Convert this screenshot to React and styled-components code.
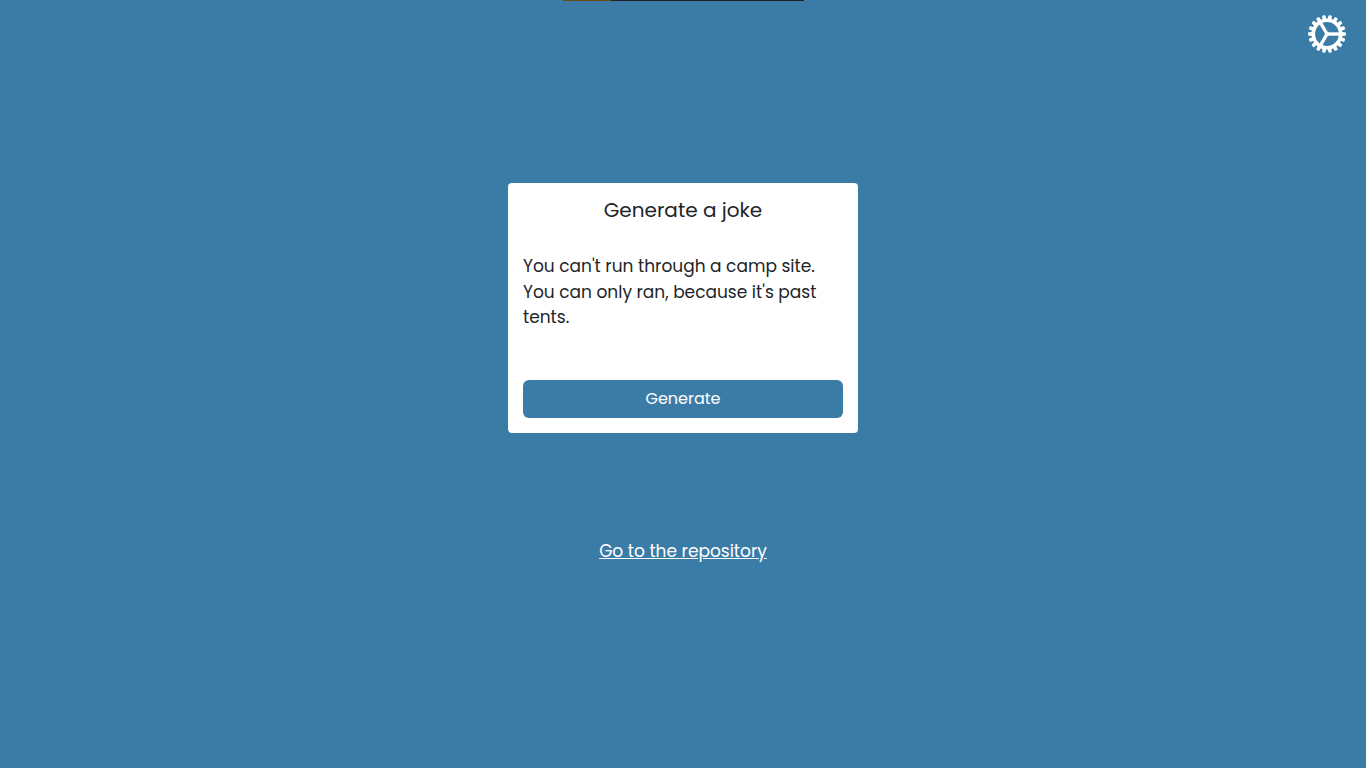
import React from "react";
import styled, { createGlobalStyle } from "styled-components";

const GlobalStyle = createGlobalStyle`
  * { box-sizing: border-box; }
  body {
    margin: 0;
    background: #3b7ca7;
    color: #212529;
    font-family: Poppins, Inter, sans-serif;
    font-size: 17px;
    line-height: 1.5;
  }
`;

const Page = styled.div`
  height: 768px;
  display: flex;
  flex-direction: column;
  align-items: center;
  overflow: hidden;
`;

const LoadingTrack = styled.div`
  width: 241px;
  height: 1px;
  background: #202124;
`;

const LoadingValue = styled.div`
  width: 48px;
  height: 1px;
  background: #6b4a16;
`;

const TopBar = styled.header`
  width: 100%;
  height: 52px;
  padding: 14px 20px 0;
  display: flex;
  justify-content: flex-end;
`;

const SettingsButton = styled.button`
  width: 38px;
  height: 38px;
  padding: 0;
  border: 0;
  background: none;
  color: #fff;
  line-height: 0;
`;

const Card = styled.main`
  width: 350px;
  height: 250px;
  margin-top: 130px;
  padding: 12px 15px 15px;
  display: flex;
  flex-direction: column;
  background: #fff;
  border-radius: 4px;
`;

const Title = styled.h1`
  margin: 0 0 29px;
  text-align: center;
  font-size: 20px;
  font-weight: 400;
  line-height: 30px;
`;

const Joke = styled.p`
  margin: 0;
  flex: 1;
`;

const GenerateButton = styled.button`
  height: 38px;
  padding: 0;
  border: 0;
  border-radius: 6px;
  background: #3b7ca7;
  color: #fff;
  font: 400 16px/24px Poppins, Inter, sans-serif;
`;

const RepositoryLink = styled.a`
  margin-top: 106px;
  color: #fff;
  text-decoration: underline;
`;

const TEETH = Array.from({ length: 18 }, (_, i) => i * 20);
const SPOKES = [0, 120, 240];

function GearIcon() {
  return (
    <svg width="38" height="38" viewBox="-19 -19 38 38" aria-hidden="true">
      <g fill="currentColor">
        {TEETH.map((angle) => (
          <path
            key={angle}
            d="M14.5-2L18.1-1.7Q18.9-1.6 18.9-.9V.9Q18.9 1.6 18.1 1.7L14.5 2Z"
            transform={`rotate(${angle})`}
          />
        ))}
      </g>
      <g fill="none" stroke="currentColor">
        <circle r="13.7" strokeWidth="3.6" />
        {SPOKES.map((angle) => (
          <path key={angle} d="M0 0H13" strokeWidth="3.4" transform={`rotate(${angle})`} />
        ))}
      </g>
      <circle r="2.2" fill="currentColor" />
    </svg>
  );
}

export default function App() {
  return (
    <Page>
      <GlobalStyle />
      <LoadingTrack>
        <LoadingValue />
      </LoadingTrack>
      <TopBar>
        <SettingsButton aria-label="Settings">
          <GearIcon />
        </SettingsButton>
      </TopBar>
      <Card>
        <Title>Generate a joke</Title>
        <Joke>
          You can't run through a camp site. You can only ran, because it's past
          tents.
        </Joke>
        <GenerateButton>Generate</GenerateButton>
      </Card>
      <RepositoryLink href="#">Go to the repository</RepositoryLink>
    </Page>
  );
}
